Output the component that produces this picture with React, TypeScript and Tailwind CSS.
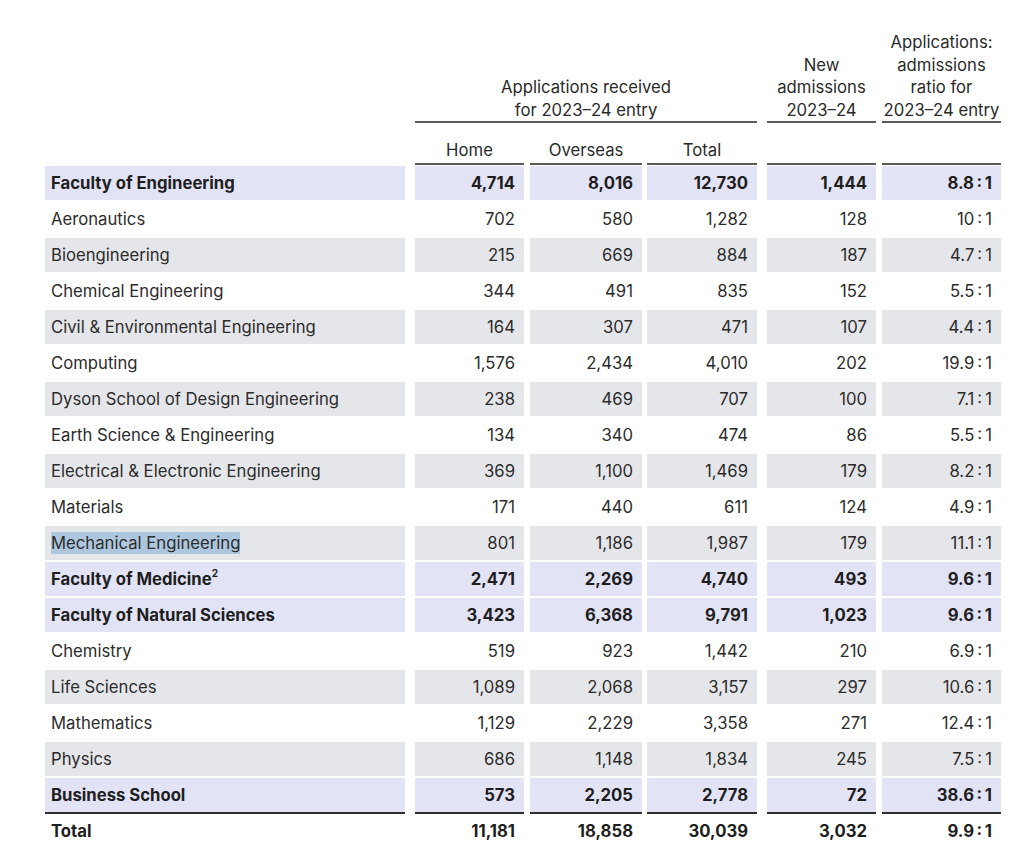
type Kind = "faculty" | "plain" | "shaded" | "total";

type Row = {
  name: string;
  sup?: string;
  home: string;
  overseas: string;
  total: string;
  admissions: string;
  ratio: string;
  kind: Kind;
  selected?: boolean;
  last?: boolean;
};

const ROWS: Row[] = [
  { name: "Faculty of Engineering", home: "4,714", overseas: "8,016", total: "12,730", admissions: "1,444", ratio: "8.8", kind: "faculty" },
  { name: "Aeronautics", home: "702", overseas: "580", total: "1,282", admissions: "128", ratio: "10", kind: "plain" },
  { name: "Bioengineering", home: "215", overseas: "669", total: "884", admissions: "187", ratio: "4.7", kind: "shaded" },
  { name: "Chemical Engineering", home: "344", overseas: "491", total: "835", admissions: "152", ratio: "5.5", kind: "plain" },
  { name: "Civil & Environmental Engineering", home: "164", overseas: "307", total: "471", admissions: "107", ratio: "4.4", kind: "shaded" },
  { name: "Computing", home: "1,576", overseas: "2,434", total: "4,010", admissions: "202", ratio: "19.9", kind: "plain" },
  { name: "Dyson School of Design Engineering", home: "238", overseas: "469", total: "707", admissions: "100", ratio: "7.1", kind: "shaded" },
  { name: "Earth Science & Engineering", home: "134", overseas: "340", total: "474", admissions: "86", ratio: "5.5", kind: "plain" },
  { name: "Electrical & Electronic Engineering", home: "369", overseas: "1,100", total: "1,469", admissions: "179", ratio: "8.2", kind: "shaded" },
  { name: "Materials", home: "171", overseas: "440", total: "611", admissions: "124", ratio: "4.9", kind: "plain" },
  { name: "Mechanical Engineering", home: "801", overseas: "1,186", total: "1,987", admissions: "179", ratio: "11.1", kind: "shaded", selected: true },
  { name: "Faculty of Medicine", sup: "2", home: "2,471", overseas: "2,269", total: "4,740", admissions: "493", ratio: "9.6", kind: "faculty" },
  { name: "Faculty of Natural Sciences", home: "3,423", overseas: "6,368", total: "9,791", admissions: "1,023", ratio: "9.6", kind: "faculty" },
  { name: "Chemistry", home: "519", overseas: "923", total: "1,442", admissions: "210", ratio: "6.9", kind: "plain" },
  { name: "Life Sciences", home: "1,089", overseas: "2,068", total: "3,157", admissions: "297", ratio: "10.6", kind: "shaded" },
  { name: "Mathematics", home: "1,129", overseas: "2,229", total: "3,358", admissions: "271", ratio: "12.4", kind: "plain" },
  { name: "Physics", home: "686", overseas: "1,148", total: "1,834", admissions: "245", ratio: "7.5", kind: "shaded" },
  { name: "Business School", home: "573", overseas: "2,205", total: "2,778", admissions: "72", ratio: "38.6", kind: "faculty", last: true },
  { name: "Total", home: "11,181", overseas: "18,858", total: "30,039", admissions: "3,032", ratio: "9.9", kind: "total" },
];

// column widths + the gaps in front of them
const COL = [
  "w-[360px]",
  "ml-[10px] w-[109px]",
  "ml-[6px] w-[112px]",
  "ml-[5px] w-[110px]",
  "ml-[10px] w-[109px]",
  "ml-[6px] w-[119px]",
];

const BG: Record<Kind, string> = {
  faculty: "bg-[#e3e3f6]",
  shaded: "bg-[#e5e6e9]",
  plain: "bg-white",
  total: "bg-white",
};

function DataRow({ row, first }: { row: Row; first: boolean }) {
  const bold = row.kind === "faculty" || row.kind === "total";
  const spacing = first ? "mt-[1px]" : row.kind === "total" ? "mt-0" : "mt-[2px]";
  const height = row.last ? "h-[36px] border-b-2 border-[#2e2e2e]" : "h-[34px]";
  const text = bold ? "font-bold text-[#1e1e1e]" : "text-[#2c2c2c]";
  const cells = [row.home, row.overseas, row.total, row.admissions, `${row.ratio}\u2009:\u20091`];

  return (
    <div className={`flex ${spacing}`}>
      <div className={`${COL[0]} ${height} ${BG[row.kind]} ${text} flex items-center pl-[6px]`}>
        {row.selected ? <span className="bg-[#adc7df]">{row.name}</span> : row.name}
        {row.sup && <sup className="text-[10px] -top-[6px]">{row.sup}</sup>}
      </div>
      {cells.map((value, i) => (
        <div
          key={i}
          className={`${COL[i + 1]} ${height} ${BG[row.kind]} ${text} flex items-center justify-end pr-[9px]`}
        >
          {value}
        </div>
      ))}
    </div>
  );
}

export default function App() {
  return (
    <div className="min-h-screen bg-white pt-[31px] pl-[45px] font-['Inter','Liberation_Sans',sans-serif] text-[16.7px] leading-[22.5px] text-[#2a2a2a]">
      {/* group headings */}
      <div className="flex items-end">
        <div className={COL[0]} />
        <div className="ml-[10px] w-[342px] border-b-2 border-[#5a5a5a] text-center">
          Applications received
          <br />
          for 2023–24 entry
        </div>
        <div className={`${COL[4]} border-b-2 border-[#5a5a5a] text-center`}>
          New
          <br />
          admissions
          <br />
          2023–24
        </div>
        <div className={`${COL[5]} border-b-2 border-[#5a5a5a] text-center`}>
          Applications:
          <br />
          admissions
          <br />
          ratio for
          <br />
          2023–24 entry
        </div>
      </div>

      {/* sub headings */}
      <div className="flex">
        <div className={COL[0]} />
        {["Home", "Overseas", "Total", "", ""].map((label, i) => (
          <div
            key={i}
            className={`${COL[i + 1]} flex h-[42px] items-end justify-center border-b-2 border-[#5a5a5a] pb-[2px]`}
          >
            {label}
          </div>
        ))}
      </div>

      {ROWS.map((row, i) => (
        <DataRow key={row.name} row={row} first={i === 0} />
      ))}
    </div>
  );
}
